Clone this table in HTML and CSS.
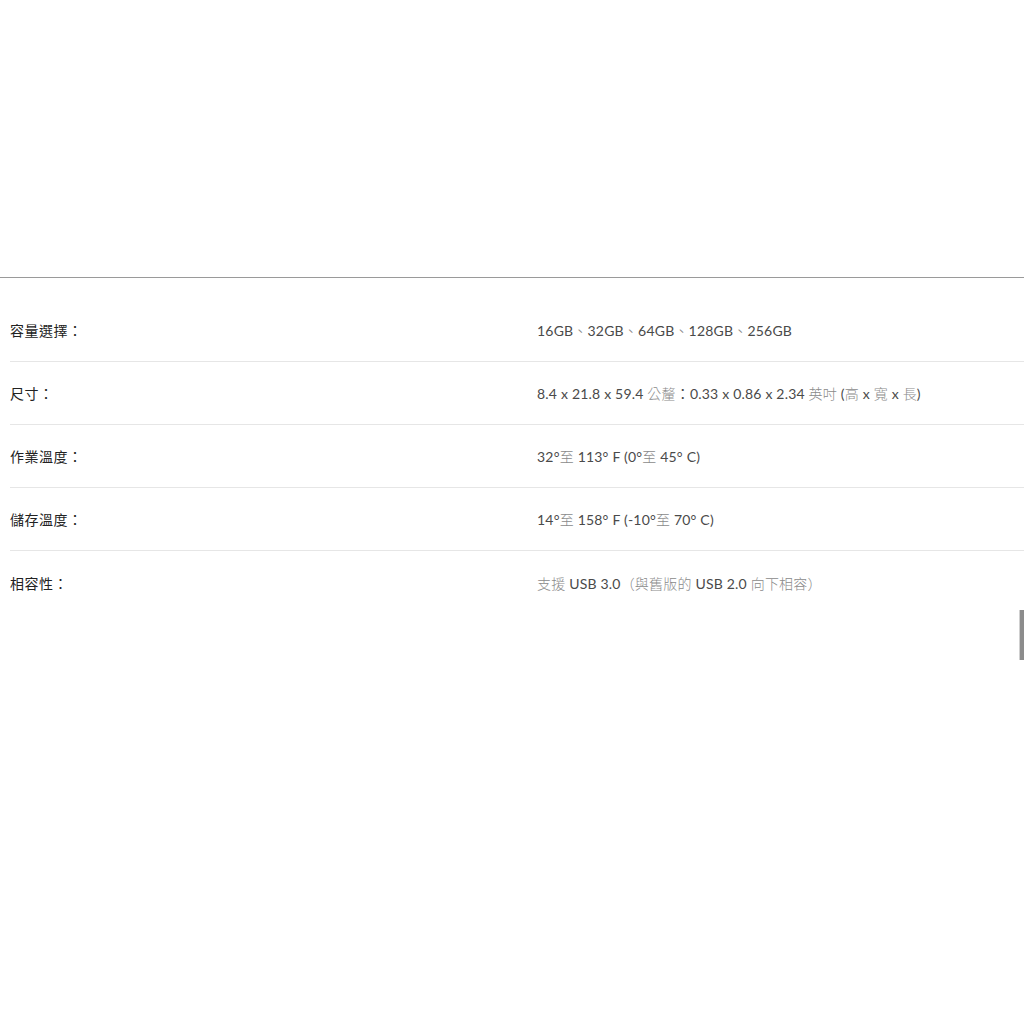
FILE: index.html
```html
<!DOCTYPE html>
<html lang="zh-Hant">
<head>
<meta charset="utf-8">
<link rel="stylesheet" href="styles.css">
</head>
<body>
<div class="page">
  <div class="spacer"></div>
  <div class="specs">
    <div class="row">
      <div class="label">容量選擇：</div>
      <div class="value">16GB<span class="cjk">、</span>32GB<span class="cjk">、</span>64GB<span class="cjk">、</span>128GB<span class="cjk">、</span>256GB</div>
    </div>
    <div class="row">
      <div class="label">尺寸：</div>
      <div class="value">8.4 x 21.8 x 59.4 <span class="cjk">公釐</span>：0.33 x 0.86 x 2.34 <span class="cjk">英吋</span> (<span class="cjk">高</span> x <span class="cjk">寬</span> x <span class="cjk">長</span>)</div>
    </div>
    <div class="row">
      <div class="label">作業溫度：</div>
      <div class="value">32°<span class="cjk">至</span> 113° F (0°<span class="cjk">至</span> 45° C)</div>
    </div>
    <div class="row">
      <div class="label">儲存溫度：</div>
      <div class="value">14°<span class="cjk">至</span> 158° F (-10°<span class="cjk">至</span> 70° C)</div>
    </div>
    <div class="row last">
      <div class="label">相容性：</div>
      <div class="value"><span class="cjk">支援</span> USB 3.0<span class="cjk">（與舊版的</span> USB 2.0 <span class="cjk">向下相容）</span></div>
    </div>
  </div>
  <div class="thumb"></div>
</div>
</body>
</html>
```
FILE: styles.css
```css
html, body {
  margin: 0;
  padding: 0;
  background: #fff;
}
.page {
  position: relative;
  width: 1024px;
  height: 1024px;
  overflow: hidden;
}
.spacer {
  height: 277px;
}
.specs {
  border-top: 1px solid #9a9a9a;
  padding-top: 20px;
  padding-left: 10px;
}
.row {
  display: grid;
  grid-template-columns: 527px 1fr;
  align-items: center;
  height: 63px;
  border-bottom: 1px solid #e6e6e6;
  box-sizing: border-box;
}
.row:first-child {
  height: 64px;
}
.row.last {
  border-bottom: none;
}
.label {
  font-family: "Noto Sans CJK TC", sans-serif;
  font-size: 14px;
  letter-spacing: 0.5px;
  color: #222;
}
.value {
  font-family: Lato, "Noto Sans CJK TC", sans-serif;
  font-size: 14px;
  letter-spacing: 0.2px;
  color: #4a4a4a;
  white-space: nowrap;
}
.cjk {
  font-family: "Noto Sans CJK TC", sans-serif;
  color: #8a8a8a;
  font-weight: 300;
}
.thumb {
  position: absolute;
  left: 1019px;
  top: 610px;
  width: 5px;
  height: 50px;
  background: #8c8c8c;
  border-left: 1px solid #cfcfcf;
  box-sizing: border-box;
}
```
